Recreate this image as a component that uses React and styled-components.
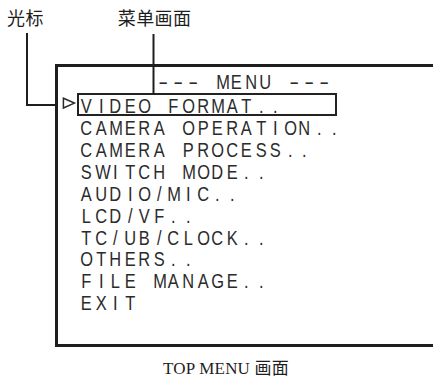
import React from "react";
import styled, { createGlobalStyle } from "styled-components";

const Global = createGlobalStyle`
  html, body { margin: 0; padding: 0; background: #ffffff; }
  body { width: 433px; height: 381px; overflow: hidden; }
`;

const Figure = styled.div`
  position: relative;
  width: 433px;
  height: 381px;
  box-sizing: border-box;
  padding-top: 8px;
  color: #2b2b2b;
`;

const LabelRow = styled.div`
  display: flex;
  align-items: flex-start;
  padding-left: 7px;
  height: 19px;
`;

const Label = styled.span`
  font-family: "Noto Sans CJK SC", sans-serif;
  font-size: 18px;
  line-height: 19px;
  letter-spacing: 0.4px;
  color: #1e1e1e;
  margin-left: ${(p) => p.$offset || 0}px;
`;

const Frame = styled.div`
  box-sizing: border-box;
  margin-top: 37px;
  margin-left: 55px;
  width: 378px;
  height: 283px;
  border-top: 3px solid #1e1e1e;
  border-left: 3px solid #1e1e1e;
  border-bottom: 3px solid #1e1e1e;
  padding-top: 5px;
  padding-left: 21px;
`;

const Header = styled.div`
  display: flex;
  height: 21.9px;
  line-height: 21.9px;
  margin-left: 77.4px;
  margin-bottom: 2.3px;
`;

const List = styled.div`
  display: flex;
  flex-direction: column;
`;

const Row = styled.div`
  position: relative;
  display: flex;
  height: 21.9px;
  line-height: 21.9px;

  &::before {
    content: "";
    display: ${(p) => (p.$selected ? "block" : "none")};
    position: absolute;
    left: -2px;
    top: -3px;
    width: 260px;
    height: 23px;
    box-sizing: border-box;
    border: 2px solid #222;
  }
`;

const Cell = styled.span`
  display: inline-block;
  flex: none;
  width: 14.57px;
  text-align: center;
  white-space: pre;
  font-family: "Liberation Sans", Arial, sans-serif;
  font-size: 19.8px;
  color: #2b2b2b;
  transform: scaleX(${(p) => p.$scale || 0.83});
`;

const Caption = styled.div`
  margin-top: 13px;
  margin-left: 163px;
  font-family: "Liberation Serif", "Noto Sans CJK SC", serif;
  font-size: 17px;
  line-height: 17px;
  letter-spacing: 0.2px;
  color: #1e1e1e;
`;

const Callouts = styled.svg`
  position: absolute;
  left: 0;
  top: 0;
  width: 433px;
  height: 381px;
  pointer-events: none;
`;

const items = [
  "VIDEO FORMAT..",
  "CAMERA OPERATION..",
  "CAMERA PROCESS..",
  "SWITCH MODE..",
  "AUDIO/MIC..",
  "LCD/VF..",
  "TC/UB/CLOCK..",
  "OTHERS..",
  "FILE MANAGE..",
  "EXIT",
];

const spell = (text) =>
  text.split("").map((ch, i) => (
    <Cell key={i} $scale={ch === "-" ? 1.5 : undefined}>
      {ch}
    </Cell>
  ));

export default function App() {
  return (
    <>
      <Global />
      <Figure>
        <LabelRow>
          <Label>光标</Label>
          <Label $offset={74}>菜单画面</Label>
        </LabelRow>
        <Frame>
          <Header>{spell("--- MENU ---")}</Header>
          <List>
            {items.map((t, i) => (
              <Row key={t} $selected={i === 0}>
                {spell(t)}
              </Row>
            ))}
          </List>
        </Frame>
        <Caption>TOP MENU 画面</Caption>
        <Callouts viewBox="0 0 433 381">
          <path
            d="M27 33 V105 H56"
            fill="none"
            stroke="#1e1e1e"
            strokeWidth="2"
          />
          <path d="M153.5 34 V93.5" fill="none" stroke="#1e1e1e" strokeWidth="2" />
          <polygon
            points="63.4,98.2 63.4,108 74.4,103.1"
            fill="none"
            stroke="#2b2b2b"
            strokeWidth="1.5"
            strokeLinejoin="miter"
          />
        </Callouts>
      </Figure>
    </>
  );
}
